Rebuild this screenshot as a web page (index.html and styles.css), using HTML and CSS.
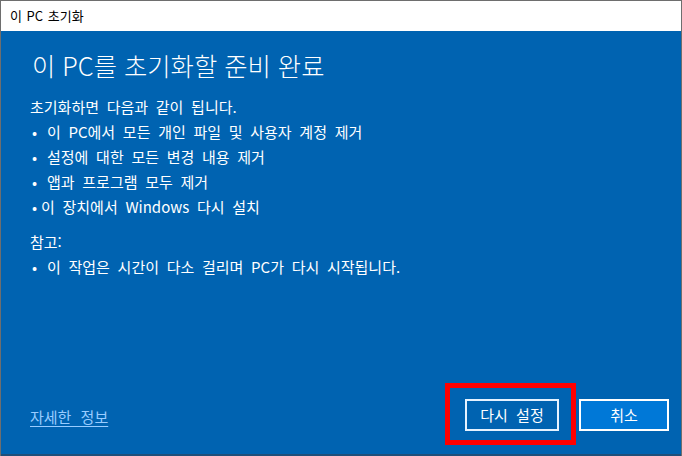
FILE: index.html
```html
<!DOCTYPE html>
<html lang="ko">
<head>
<meta charset="utf-8">
<link rel="stylesheet" href="styles.css">
</head>
<body>
<div class="window">
  <div class="titlebar">이 PC 초기화</div>
  <div class="content">
    <h1 class="heading">이 PC를 초기화할 준비 완료</h1>
    <div class="body">
      <p class="line">초기화하면 다음과 같이 됩니다.</p>
      <p class="line item"><span class="dot">•</span>이 PC에서 모든 개인 파일 및 사용자 계정 제거</p>
      <p class="line item"><span class="dot">•</span>설정에 대한 모든 변경 내용 제거</p>
      <p class="line item"><span class="dot">•</span>앱과 프로그램 모두 제거</p>
      <p class="line item tight"><span class="dot">•</span>이 장치에서 Windows 다시 설치</p>
      <p class="line note">참고:</p>
      <p class="line item"><span class="dot">•</span>이 작업은 시간이 다소 걸리며 PC가 다시 시작됩니다.</p>
    </div>
    <div class="footer">
      <a class="link" href="#">자세한 정보</a>
      <div class="buttons">
        <div class="primary-wrap">
          <button class="btn btn-reset">다시 설정</button>
          <div class="highlight"></div>
        </div>
        <button class="btn btn-cancel">취소</button>
      </div>
    </div>
  </div>
</div>
</body>
</html>
```
FILE: styles.css
```css
html, body {
  margin: 0;
  padding: 0;
  background: #ffffff;
}
body {
  font-family: "Noto Sans CJK KR", "Noto Sans", sans-serif;
}
.window {
  width: 682px;
  height: 456px;
  box-sizing: border-box;
  border: 1px solid #6e6e6e;
  border-bottom: 0;
  display: flex;
  flex-direction: column;
  background: #0063b1;
}
.titlebar {
  height: 30px;
  line-height: 29px;
  background: #ffffff;
  color: #000000;
  font-size: 13px;
  word-spacing: 1px;
  padding-left: 9px;
  flex: none;
}
.content {
  flex: 1;
  display: flex;
  flex-direction: column;
  background: #0063b1;
  color: #ffffff;
  padding: 0 12px 0 29px;
  border-bottom: 2px solid #1f4f7a;
}
.heading {
  margin: 16px 0 0 2px;
  font-size: 25.3px;
  font-weight: 300;
  line-height: 36px;
  word-spacing: 0;
}
.body {
  margin-top: 11px;
}
.line {
  margin: 0;
  font-size: 15px;
  word-spacing: 3.5px;
  line-height: 25px;
  height: 25px;
}
.item .dot {
  display: inline-block;
  width: 15px;
  margin-left: 2px;
  word-spacing: 0;
}
.item.tight .dot {
  width: 9px;
}
.note {
  margin-top: 10px;
}
.footer {
  margin-top: auto;
  margin-bottom: 23px;
  display: flex;
  align-items: center;
  justify-content: space-between;
}
.link {
  color: #99ccff;
  font-size: 15px;
  word-spacing: 5px;
  text-decoration: underline;
  text-underline-offset: 3px;
  margin-top: 2px;
}
.buttons {
  display: flex;
  gap: 20px;
  align-items: center;
}
.primary-wrap {
  position: relative;
}
.btn {
  display: block;
  height: 32px;
  box-sizing: border-box;
  border: 2px solid #ffffff;
  color: #ffffff;
  font-family: "Noto Sans CJK KR", "Noto Sans", sans-serif;
  font-size: 15px;
  word-spacing: 4px;
  padding: 0;
  line-height: 26px;
}
.btn-reset {
  width: 94px;
  background: #0063b1;
  border-color: #e6f2ff;
}
.btn-cancel {
  width: 90px;
  background: #0078d7;
}
.highlight {
  position: absolute;
  left: -20px;
  top: -16px;
  width: 131px;
  height: 62px;
  box-sizing: border-box;
  border: 5px solid #ff0000;
  pointer-events: none;
}
```
